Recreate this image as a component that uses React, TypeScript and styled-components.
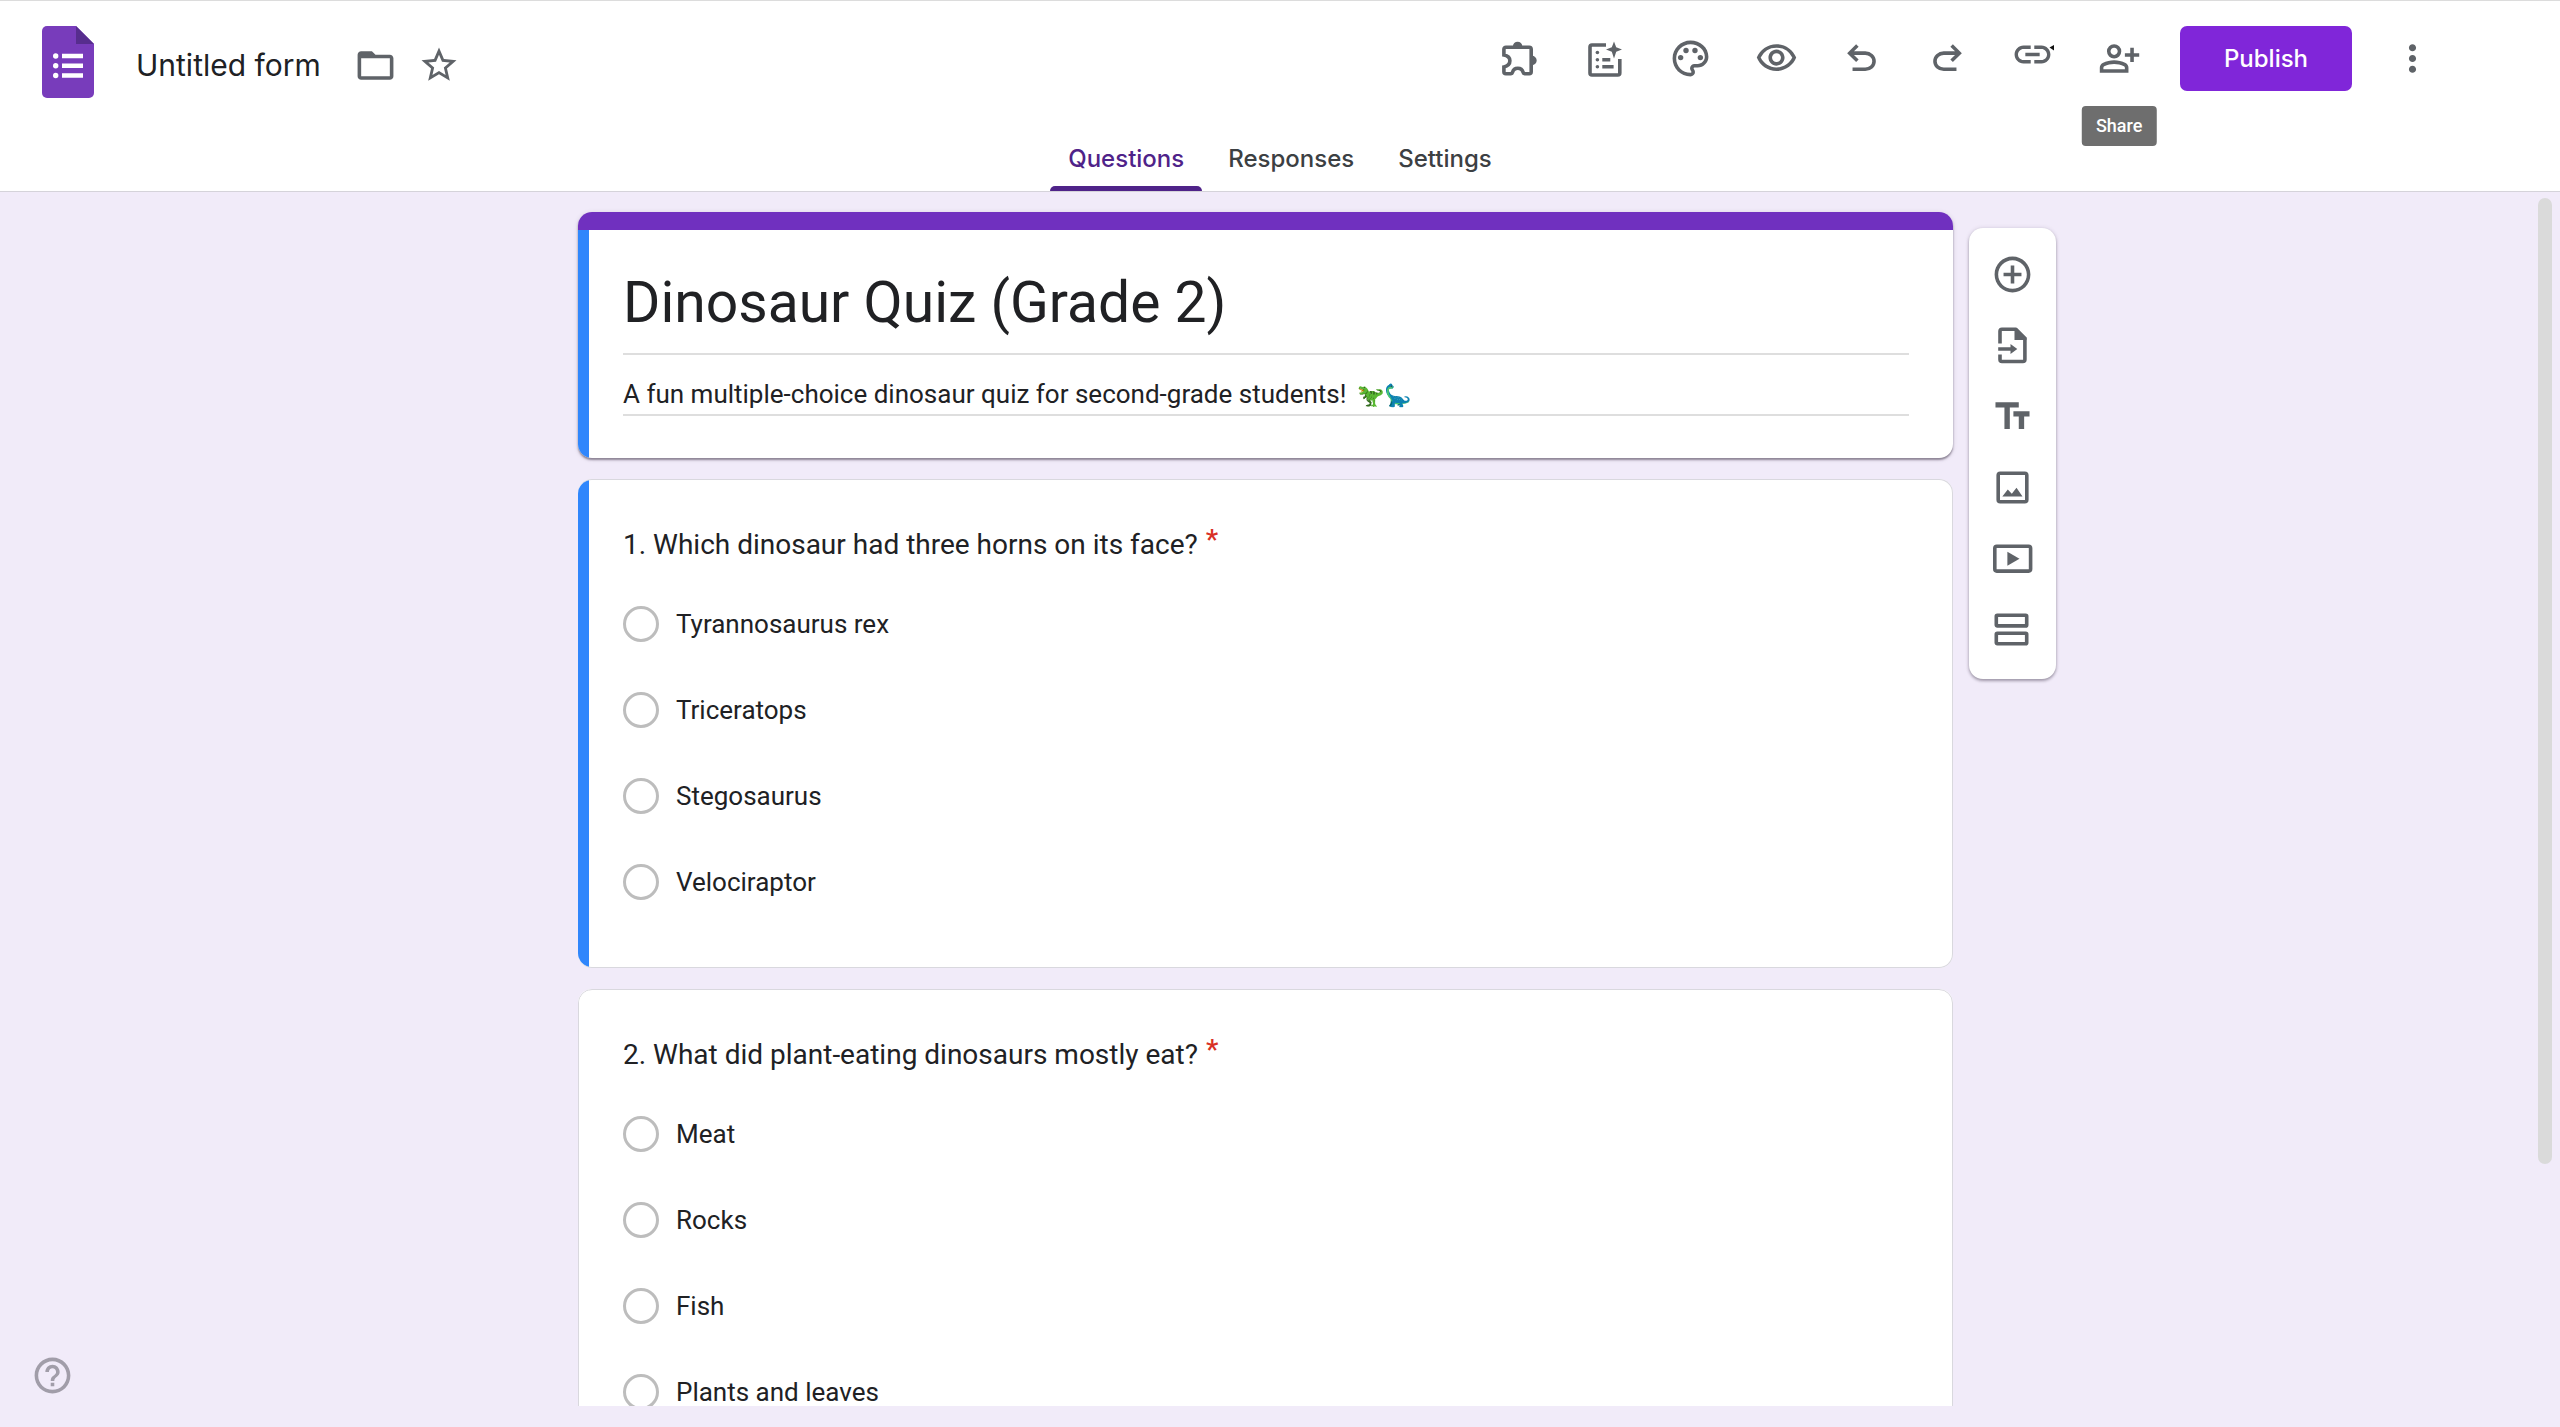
import React from "react";
import styled, { createGlobalStyle } from "styled-components";
import {
  MdAddCircleOutline,
  MdFolderOpen,
  MdHelpOutline,
  MdLink,
  MdMoreVert,
  MdOutlinePalette,
  MdOutlineVisibility,
  MdStarBorder,
  MdTextFields,
} from "react-icons/md";

const color = {
  ink: "#202124",
  icon: "#5f6368",
  tab: "#3c4043",
  accent: "#7030bf",
  accentDark: "#4f2389",
  publish: "#8026d9",
  active: "#2f86fc",
  page: "#f1ebf9",
  line: "#d9d8de",
};

const display = `Inter, Roboto, sans-serif`;
const body = `Roboto, "Liberation Sans", sans-serif`;

const GlobalStyle = createGlobalStyle`
  *, *::before, *::after { box-sizing: border-box; }
  body { margin: 0; background: ${color.page}; color: ${color.ink}; font-family: ${body}; }
  button, input { font: inherit; color: inherit; margin: 0; padding: 0; border: 0; background: none; outline: none; }
  button { cursor: pointer; }
  svg { display: block; }
`;

const Page = styled.div`
  display: flex;
  flex-direction: column;
  height: 100vh;
  overflow: hidden;
`;

const Header = styled.header`
  padding-top: 25px;
  background: #fff;
  border-top: 1px solid #dcdcdc;
  border-bottom: 1px solid #d5d3da;
`;

const TopRow = styled.div`
  display: flex;
  align-items: flex-start;
  justify-content: space-between;
  padding: 0 106px 0 42px;
`;

const Brand = styled.div`
  display: flex;
  align-items: center;
  height: 72px;
`;

const Logo = styled.svg`
  width: 52px;
  height: 72px;
`;

const DocBar = styled.div`
  display: flex;
  align-items: center;
  padding: 6px 0 0 42px;
`;

const DocName = styled.input`
  width: 207px;
  font-family: ${display};
  font-size: 30px;
  line-height: 40px;
`;

const IconButton = styled.button<{ $width: number; $height: number }>`
  position: relative;
  display: flex;
  align-items: center;
  justify-content: center;
  width: ${(p) => p.$width}px;
  height: ${(p) => p.$height}px;
  color: ${color.icon};
`;

const Actions = styled.div`
  display: flex;
  align-items: center;
  gap: 18px;
`;

const Tools = styled.div`
  display: grid;
  grid-template-columns: repeat(8, 1fr);
  justify-items: center;
  width: 686px;
`;

const Publish = styled.button`
  width: 172px;
  height: 65px;
  border-radius: 7px;
  background: ${color.publish};
  color: #fff;
  font-family: ${display};
  font-size: 24px;
  font-weight: 500;
`;

const Tooltip = styled.span`
  position: absolute;
  top: 80px;
  left: 50%;
  transform: translateX(-50%);
  padding: 0 14px;
  border-radius: 4px;
  background: #6e6e6e;
  color: #fff;
  font-size: 18px;
  font-weight: 500;
  line-height: 40px;
`;

const Tabs = styled.div`
  display: flex;
  justify-content: center;
  gap: 8px;
  margin-top: 36px;
`;

const Tab = styled.button<{ $active?: boolean }>`
  display: flex;
  flex-direction: column;
  font-family: ${display};
  font-size: 24px;
  font-weight: 500;
  line-height: 50px;
  color: ${(p) => (p.$active ? color.accentDark : color.tab)};

  &::after {
    content: "";
    width: 100%;
    height: 5px;
    margin-top: 2px;
    border-radius: 5px 5px 0 0;
    background: ${(p) => (p.$active ? color.accentDark : "transparent")};
  }
`;

const TabLabel = styled.span`
  padding: 0 18px;
`;

const Workspace = styled.main`
  position: relative;
  display: flex;
  flex: 1;
  min-height: 0;
  padding-bottom: 21px;
`;

const Canvas = styled.div`
  display: grid;
  grid-template-columns: 1fr minmax(0, 1375px) 1fr;
  align-items: start;
  flex: 1;
  padding-top: 20px;
  overflow: hidden;
`;

const ScrollTrack = styled.div`
  width: 29px;
  padding: 6px 8px 0 7px;
`;

const ScrollThumb = styled.div`
  height: 80%;
  border-radius: 7px;
  background: #dadada;
`;

const Cards = styled.div`
  grid-column: 2;
  display: flex;
  flex-direction: column;
  gap: 21px;
`;

const TitleCard = styled.section`
  border-radius: 14px;
  background: #fff;
  overflow: hidden;
  box-shadow: 0 2px 2px rgba(60, 50, 70, 0.5), 0 1px 5px rgba(60, 50, 70, 0.15);
`;

const TitleBand = styled.div`
  height: 18px;
  background: ${color.accent};
`;

const TitleBody = styled.div`
  padding: 34px 44px 42px 34px;
  border-left: 11px solid ${color.active};
`;

const TitleInput = styled.input`
  display: block;
  width: 100%;
  height: 91px;
  padding-bottom: 13px;
  border-bottom: 2px solid #dedede;
  font-size: 57px;
`;

const Description = styled.div`
  height: 42px;
  margin-top: 19px;
  border-bottom: 2px solid #dedede;
  font-size: 26px;
  line-height: 40px;
  outline: none;
`;

const Emojis = styled.span`
  margin-left: 4px;
  font-size: 22px;
`;

const Emoji = styled.span<{ $blue?: boolean }>`
  filter: ${(p) => (p.$blue ? "hue-rotate(60deg) brightness(0.85)" : "hue-rotate(30deg)")};
`;

const QuestionCard = styled.fieldset<{ $active?: boolean }>`
  min-width: 0;
  margin: 0;
  padding: 0;
  border: 1px solid ${color.line};
  border-left-width: ${(p) => (p.$active ? 0 : 1)}px;
  border-radius: 14px;
  background: #fff;
  overflow: hidden;
`;

const QuestionBody = styled.div<{ $active?: boolean }>`
  padding: 45px 43px 42px 34px;
  border-left: ${(p) => (p.$active ? `11px solid ${color.active}` : "10px solid #fff")};
`;

const QuestionText = styled.div`
  margin-bottom: 16px;
  font-size: 28px;
  line-height: 40px;
`;

const Required = styled.span`
  margin-left: 8px;
  color: #d93025;
  font-weight: 500;
  line-height: 20px;
  vertical-align: 5px;
`;

const Option = styled.label`
  display: flex;
  align-items: center;
  gap: 17px;
  height: 86px;
  font-size: 26px;
`;

const Radio = styled.input`
  appearance: none;
  width: 36px;
  height: 36px;
  border: 3px solid #bdbdbd;
  border-radius: 50%;

  &:checked {
    border-color: ${color.accent};
    background: radial-gradient(${color.accent} 40%, transparent 42%);
  }
`;

const SideTools = styled.div`
  display: flex;
  flex-direction: column;
  justify-self: start;
  margin: 16px 0 0 16px;
  padding: 11px 0 14px;
  border-radius: 14px;
  background: #fff;
  box-shadow: 0 2px 3px rgba(60, 50, 70, 0.4), 0 0 4px rgba(60, 50, 70, 0.15);
`;

const Help = styled.button`
  position: absolute;
  left: 31px;
  bottom: 30px;
  color: #a19da9;
`;

const FormsLogo = () => (
  <Logo viewBox="0 0 52 72" aria-hidden="true">
    <path d="M5 0H34L52 18V67a5 5 0 0 1-5 5H5a5 5 0 0 1-5-5V5a5 5 0 0 1 5-5Z" fill="#783cbb" />
    <path d="M34 0L52 18H34Z" fill="#572d8e" />
    <g fill="#fff">
      <circle cx="13.7" cy="30" r="2.7" />
      <circle cx="13.7" cy="39.7" r="2.7" />
      <circle cx="13.7" cy="49.5" r="2.7" />
      <path d="M20 27.7h21v4.6H20zM20 37.4h21v4.6H20zM20 47.2h21v4.6H20z" />
    </g>
  </Logo>
);

const Puzzle = () => (
  <svg width="38" height="36" viewBox="-2 0 38 36" fill="none" aria-hidden="true">
    <path
      d="M1.9 14V8.2a2 2 0 0 1 2-2h23.3a2 2 0 0 1 2 2v22.6a2 2 0 0 1-2 2h-4.4a2 2 0 0 1-1.7-1.5a5.5 5.5 0 0 0-10.6 0a2 2 0 0 1-1.7 1.5H3.9a2 2 0 0 1-2-2v-4.9c8-1.6 8-10.6 0-11.9Z"
      stroke="currentColor"
      strokeWidth="3.6"
    />
    <path d="M10.9 5.4a4.7 4.7 0 0 1 9.4 0zM30 14.8a4.7 4.7 0 0 1 0 9.4z" fill="currentColor" />
  </svg>
);

const FormSparkle = () => (
  <svg width="36" height="36" viewBox="0 0 36 36" fill="none" aria-hidden="true">
    <path d="M19 4H5a2 2 0 0 0-2 2v26a2 2 0 0 0 2 2h25.8a2 2 0 0 0 2-2V18" stroke="currentColor" strokeWidth="3.6" />
    <path d="M27 0.5l2.2 5.8L35 8.500l-5.8 2.2L27 17.500l-2.2-6.8L19 8.500l5.8-2.2z" fill="currentColor" />
    <g fill="currentColor">
      <circle cx="10.4" cy="11.5" r="1.8" />
      <circle cx="10.4" cy="18.7" r="1.8" />
      <circle cx="10.4" cy="25.8" r="1.8" />
      <path d="M15.3 17h8v3.4h-8zM15.3 24.1h11.3v3.4H15.3z" />
    </g>
  </svg>
);

const Symbol = ({ d }: { d: string }) => (
  <svg width="43" height="43" viewBox="0 -960 960 960" fill="currentColor" aria-hidden="true">
    <path d={d} />
  </svg>
);

const UNDO =
  "M280-200v-80h284q63 0 109.5-40T720-420q0-60-46.5-100T564-560H312l104 104-56 56-200-200 200-200 56 56-104 104h252q97 0 166.5 63T800-420q0 94-69.5 157T564-200H280Z";
const REDO =
  "M396-200q-97 0-166.5-63T160-420q0-94 69.5-157T396-640h252L544-744l56-56 200 200-200 200-56-56 104-104H396q-63 0-109.5 40T240-420q0 60 46.5 100T396-280h284v80H396Z";
const PERSON_ADD =
  "M720-400v-120H600v-80h120v-120h80v120h120v80H800v120h-80Zm-360-80q-66 0-113-47t-47-113q0-66 47-113t113-47q66 0 113 47t47 113q0 66-47 113t-113 47ZM40-160v-112q0-34 17.5-62.5T104-378q62-31 126-46.5T360-440q66 0 130 15.5T616-378q29 15 46.5 43.5T680-272v112H40Zm80-80h480v-32q0-11-5.5-20T580-306q-54-27-109-40.5T360-360q-56 0-111 13.5T140-306q-9 5-14.5 14t-5.5 20v32Zm240-320q33 0 56.5-23.5T440-640q0-33-23.5-56.5T360-720q-33 0-56.5 23.5T280-640q0 33 23.5 56.5T360-560Z";

const LinkWithMark = () => (
  <svg width="46" height="43" viewBox="-1 0 46 43" aria-hidden="true">
    <MdLink size={43} y={-4} />
    <path d="M38.5 10.5L43 8v5.5z" fill="#111" />
  </svg>
);

const ImportQuestions = () => (
  <svg width="43" height="43" viewBox="0 0 43 43" fill="none" aria-hidden="true">
    <path
      d="M9 19.5V7.3a2 2 0 0 1 2-2h13.6l9.3 9.3V35.5a2 2 0 0 1-2 2H11a2 2 0 0 1-2-2V30.5"
      stroke="currentColor"
      strokeWidth="3.6"
    />
    <path d="M23.5 4H26L35.5 13.5V16H23.5ZM7.2 23.2H19.5V20L26.3 25L19.5 30V26.8H7.2Z" fill="currentColor" />
  </svg>
);

const AddImage = () => (
  <svg width="43" height="43" viewBox="0 0 43 43" fill="none" aria-hidden="true">
    <rect x="7.2" y="7.2" width="28.6" height="28.6" rx="2" stroke="currentColor" strokeWidth="3.6" />
    <path d="M11.3 30.5l5.5-7 4 4.2 4.7-6L31.500 30.5z" fill="currentColor" />
  </svg>
);

const AddVideo = () => (
  <svg width="43" height="43" viewBox="0 0 43 43" fill="none" aria-hidden="true">
    <rect x="3.8" y="9.3" width="35.8" height="24.8" rx="2" stroke="currentColor" strokeWidth="3.6" />
    <path d="M16.4 14.7L28.5 21.7L16.4 28.7Z" fill="currentColor" />
  </svg>
);

const AddSection = () => (
  <svg width="43" height="43" viewBox="0 0 43 43" fill="none" stroke="currentColor" strokeWidth="3.6" aria-hidden="true">
    <rect x="5.3" y="7.3" width="30.4" height="10.6" rx="1" />
    <rect x="5.3" y="25.2" width="30.4" height="10.6" rx="1" />
  </svg>
);

const tools: { label: string; icon: React.ReactNode; tip?: boolean }[] = [
  { label: "Add-ons", icon: <Puzzle /> },
  { label: "Help me create a form", icon: <FormSparkle /> },
  { label: "Customize theme", icon: <MdOutlinePalette size={43} /> },
  { label: "Preview", icon: <MdOutlineVisibility size={43} /> },
  { label: "Undo", icon: <Symbol d={UNDO} /> },
  { label: "Redo", icon: <Symbol d={REDO} /> },
  { label: "Copy responder link", icon: <LinkWithMark /> },
  { label: "Share", icon: <Symbol d={PERSON_ADD} />, tip: true },
];

const sideTools: { label: string; icon: React.ReactNode }[] = [
  { label: "Add question", icon: <MdAddCircleOutline size={43} /> },
  { label: "Import questions", icon: <ImportQuestions /> },
  { label: "Add title and description", icon: <MdTextFields size={43} /> },
  { label: "Add image", icon: <AddImage /> },
  { label: "Add video", icon: <AddVideo /> },
  { label: "Add section", icon: <AddSection /> },
];

const questions = [
  {
    text: "1. Which dinosaur had three horns on its face?",
    options: ["Tyrannosaurus rex", "Triceratops", "Stegosaurus", "Velociraptor"],
  },
  {
    text: "2. What did plant-eating dinosaurs mostly eat?",
    options: ["Meat", "Rocks", "Fish", "Plants and leaves"],
  },
];

export default function App() {
  return (
    <Page>
      <GlobalStyle />
      <Header>
        <TopRow>
          <Brand>
            <FormsLogo />
            <DocBar>
              <DocName aria-label="Document name" defaultValue="Untitled form" />
              <IconButton $width={64} $height={64} aria-label="Move to folder">
                <MdFolderOpen size={43} />
              </IconButton>
              <IconButton $width={64} $height={64} aria-label="Star">
                <MdStarBorder size={42} />
              </IconButton>
            </DocBar>
          </Brand>
          <Actions>
            <Tools>
              {tools.map((t) => (
                <IconButton key={t.label} $width={80} $height={65} aria-label={t.label}>
                  {t.icon}
                  {t.tip && <Tooltip role="tooltip">{t.label}</Tooltip>}
                </IconButton>
              ))}
            </Tools>
            <Publish>Publish</Publish>
            <IconButton $width={84} $height={65} aria-label="More">
              <MdMoreVert size={43} />
            </IconButton>
          </Actions>
        </TopRow>
        <Tabs role="tablist">
          {["Questions", "Responses", "Settings"].map((name, i) => (
            <Tab key={name} role="tab" aria-selected={i === 0} $active={i === 0}>
              <TabLabel>{name}</TabLabel>
            </Tab>
          ))}
        </Tabs>
      </Header>
      <Workspace>
        <Canvas>
          <Cards>
            <TitleCard>
              <TitleBand />
              <TitleBody>
                <TitleInput aria-label="Form title" defaultValue="Dinosaur Quiz (Grade 2)" />
                <Description role="textbox" aria-label="Form description" contentEditable suppressContentEditableWarning>
                  A fun multiple-choice dinosaur quiz for second-grade students!{" "}
                  <Emojis>
                    <Emoji>🦖</Emoji>
                    <Emoji $blue>🦕</Emoji>
                  </Emojis>
                </Description>
              </TitleBody>
            </TitleCard>
            {questions.map((q, i) => (
              <QuestionCard key={q.text} $active={i === 0} aria-label={q.text}>
                <QuestionBody $active={i === 0}>
                  <QuestionText>
                    {q.text}
                    <Required>*</Required>
                  </QuestionText>
                  {q.options.map((o) => (
                    <Option key={o}>
                      <Radio type="radio" name={`question-${i}`} />
                      {o}
                    </Option>
                  ))}
                </QuestionBody>
              </QuestionCard>
            ))}
          </Cards>
          <SideTools role="toolbar" aria-label="Add items">
            {sideTools.map((t) => (
              <IconButton key={t.label} $width={87} $height={71} aria-label={t.label}>
                {t.icon}
              </IconButton>
            ))}
          </SideTools>
        </Canvas>
        <ScrollTrack>
          <ScrollThumb />
        </ScrollTrack>
        <Help aria-label="Help">
          <MdHelpOutline size={43} />
        </Help>
      </Workspace>
    </Page>
  );
}
